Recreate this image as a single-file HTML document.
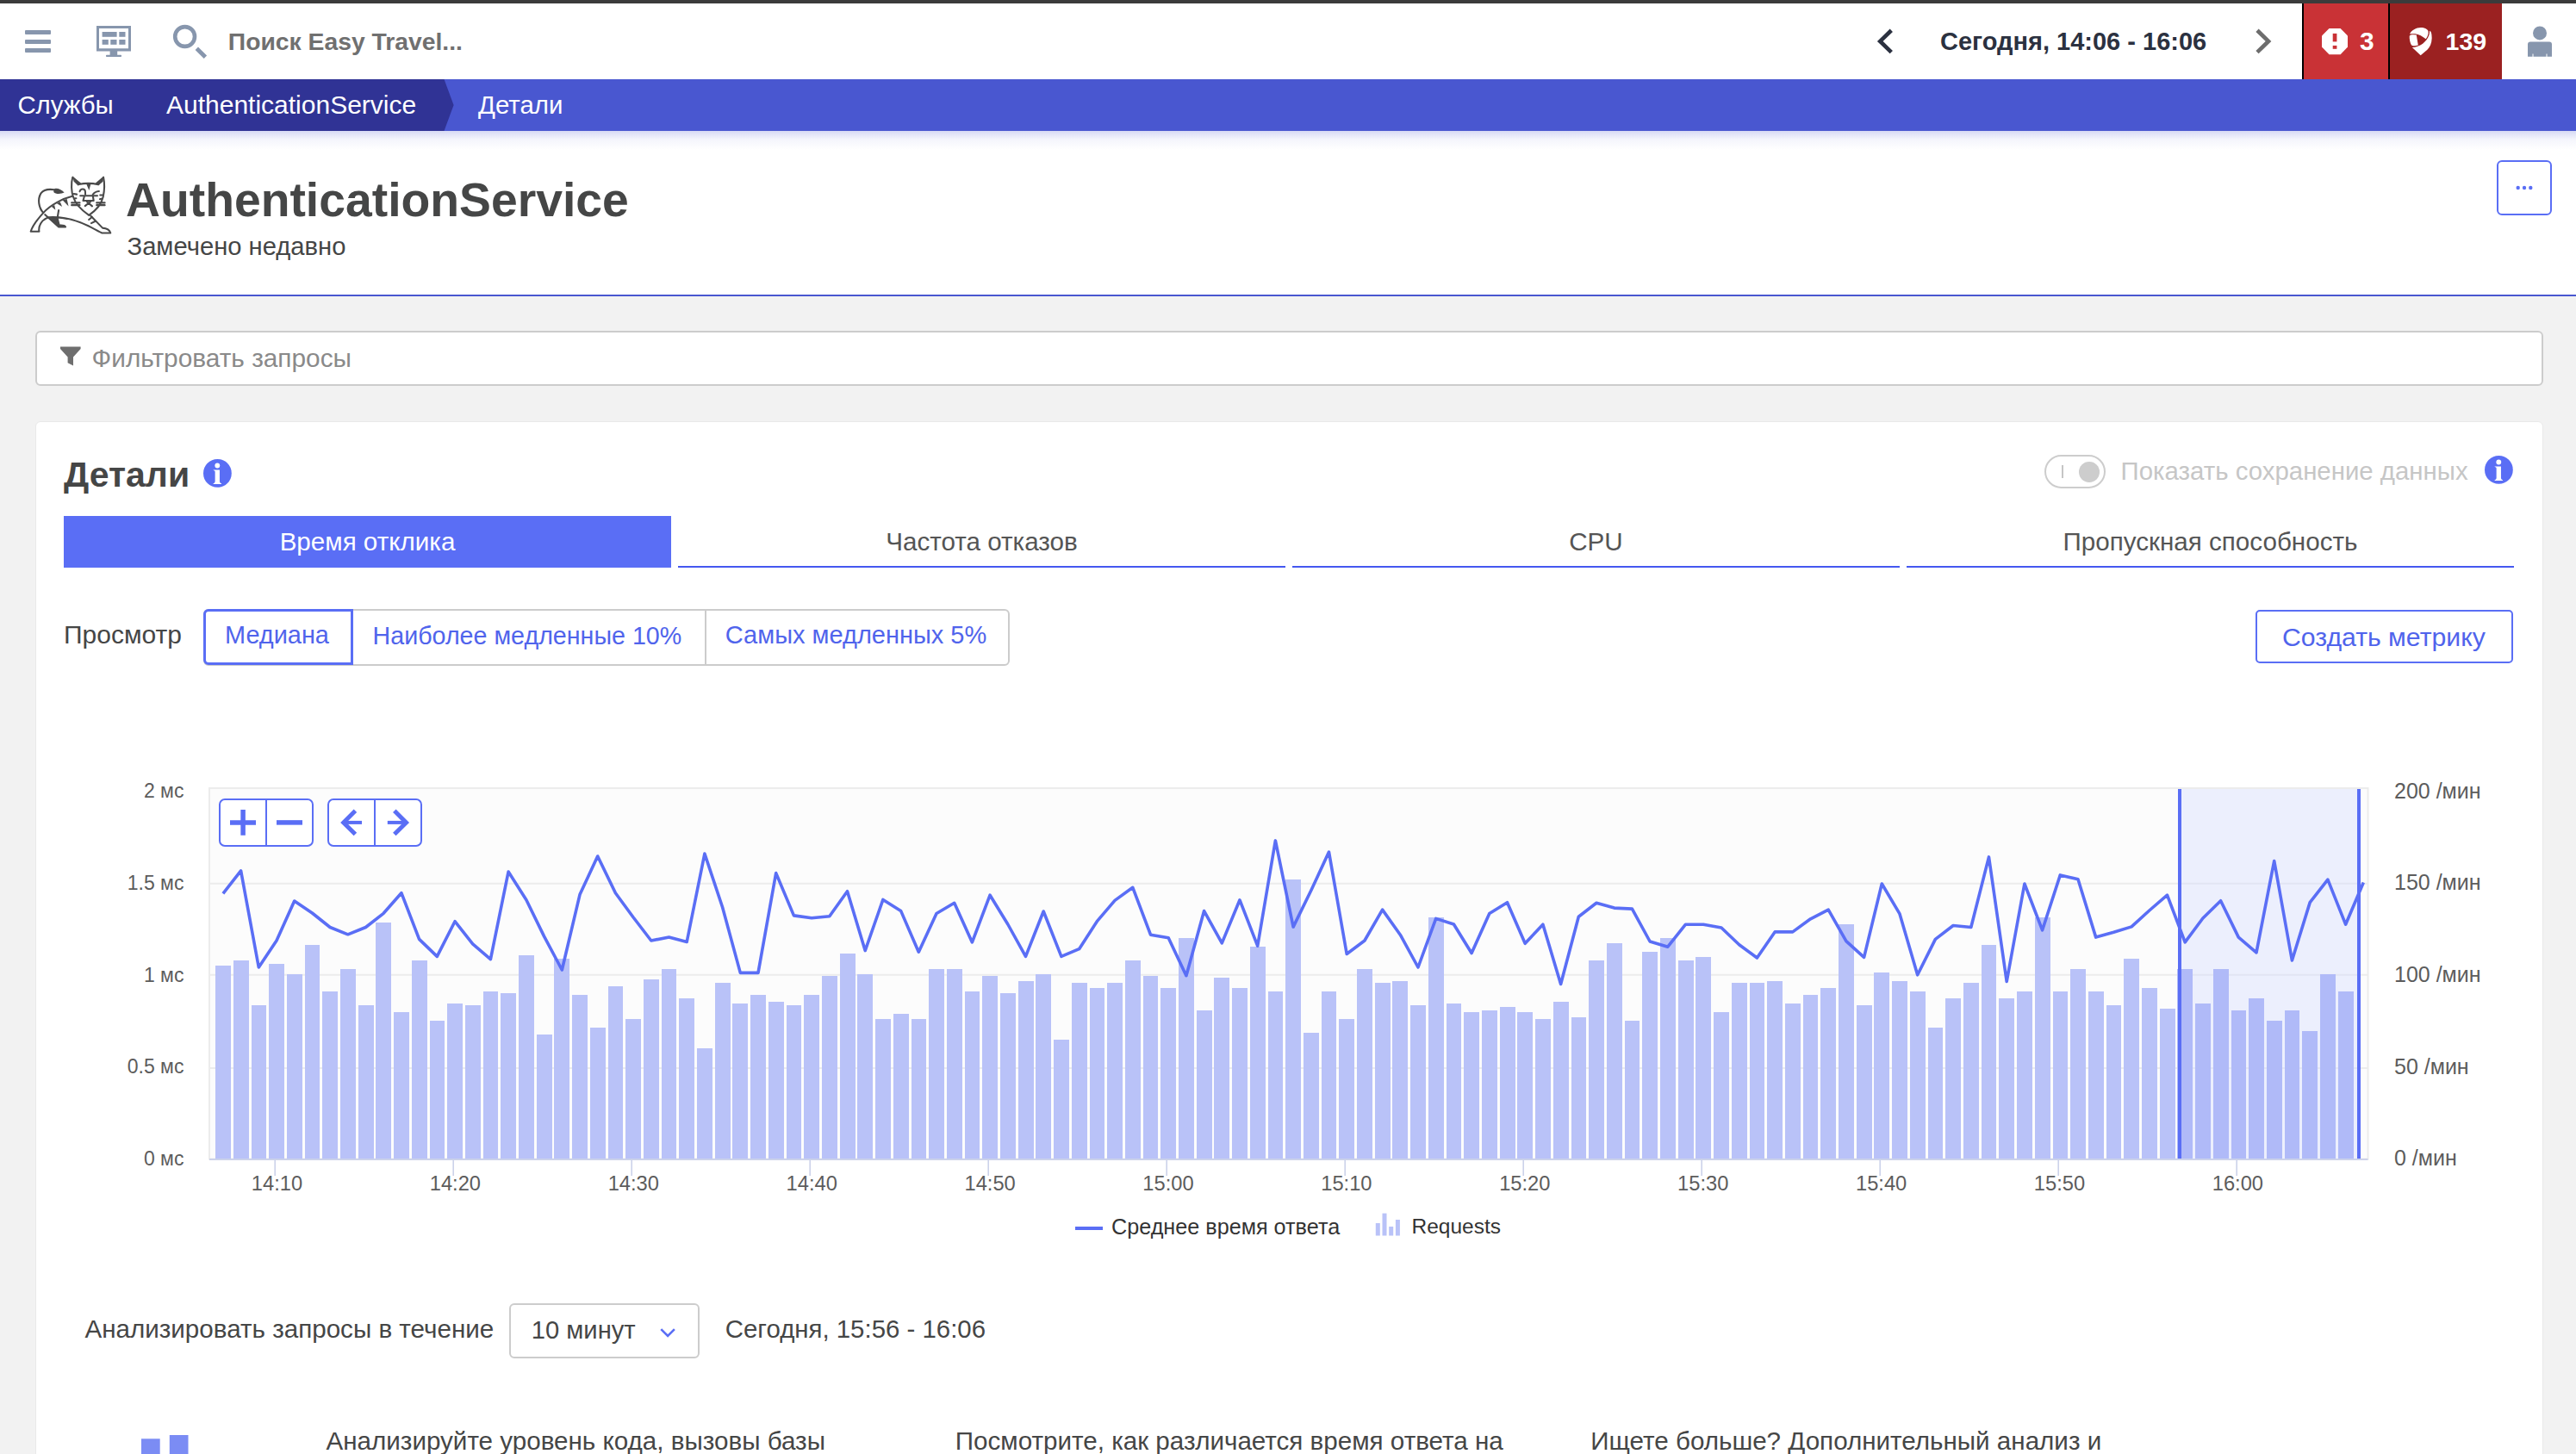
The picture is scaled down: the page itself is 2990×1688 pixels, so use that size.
<!DOCTYPE html>
<html><head><meta charset="utf-8"><title>AuthenticationService</title>
<style>
html,body{margin:0;padding:0;}
body{width:2990px;height:1688px;overflow:hidden;position:relative;background:#f2f2f2;font-family:"Liberation Sans", sans-serif;}
.t{position:absolute;line-height:1;white-space:nowrap;}
svg{position:absolute;overflow:visible;}
</style></head><body>
<div style="position:absolute;left:0px;top:0px;width:2990px;height:92px;background:#ffffff;"></div>
<div style="position:absolute;left:0px;top:0px;width:2990px;height:4px;background:#3b3b3b;"></div>
<div style="position:absolute;left:29px;top:35.3px;width:30px;height:4.5px;background:#8796ad;border-radius:1px;"></div>
<div style="position:absolute;left:29px;top:46px;width:30px;height:4.5px;background:#8796ad;border-radius:1px;"></div>
<div style="position:absolute;left:29px;top:56.2px;width:30px;height:4.5px;background:#8796ad;border-radius:1px;"></div>
<svg style="left:0;top:0" width="300" height="92" viewBox="0 0 300 92">
<g fill="#8796ad">
<path d="M112 30h40v29.4h-40zM115 33v23.2h34V33z" fill-rule="evenodd"/>
<rect x="118.6" y="37" width="17" height="5.8"/><rect x="138.3" y="37" width="7.2" height="5.8"/>
<rect x="118.6" y="46" width="7.2" height="5.8"/><rect x="128.3" y="46" width="7.2" height="5.8"/><rect x="138.3" y="46" width="7.2" height="5.8"/>
<rect x="127.6" y="59" width="8.6" height="5"/><rect x="123" y="63.8" width="18" height="2.2" rx="0.8"/>
</g>
<circle cx="214.6" cy="42.5" r="11.4" fill="none" stroke="#8796ad" stroke-width="4.6"/>
<path d="M228.3 56.2L238.4 66.2" stroke="#8796ad" stroke-width="4.8"/>
</svg>
<div class="t" style="left:264.8px;top:34.4px;font-size:28.3px;color:#707070;font-weight:700;">Поиск Easy Travel...</div>
<svg style="left:0;top:0" width="2990" height="92" viewBox="0 0 2990 92">
<path d="M2195.3 35.2L2182.3 47.9L2195.3 60.6" fill="none" stroke="#2b3140" stroke-width="4.7"/>
<path d="M2620 35.2L2633 47.9L2620 60.6" fill="none" stroke="#6d6d6d" stroke-width="4.7"/>
</svg>
<div class="t" style="left:2252.0px;top:34.2px;font-size:29px;color:#2b3140;font-weight:700;">Сегодня, 14:06 - 16:06</div>
<div style="position:absolute;left:2672px;top:4px;width:100px;height:88px;background:#c93236;"></div>
<div style="position:absolute;left:2774px;top:4px;width:130px;height:88px;background:#9b2121;"></div>
<div style="position:absolute;left:2672px;top:4px;width:2px;height:88px;background:#000000;"></div>
<div style="position:absolute;left:2772px;top:4px;width:2px;height:88px;background:#000000;"></div>
<svg style="left:0;top:0" width="2990" height="92" viewBox="0 0 2990 92">
<path d="M2703.5 32.9H2716.6L2725 41.5V54.5L2716.6 63.2H2703.5L2695 54.5V41.5z" fill="#fff"/>
<rect x="2707.7" y="38.9" width="4.7" height="9.5" fill="#c93236"/><rect x="2707.7" y="52.9" width="4.7" height="3.9" fill="#c93236"/>
</svg>
<svg style="left:2790px;top:26px" width="40" height="44" viewBox="0 0 1322 1454"><g fill="#fff">
<path d="M232 445C290 300 480 195 655 195C800 195 930 255 945 345C955 440 915 550 850 640C730 540 580 460 440 440C360 430 280 435 232 445Z"/>
<path d="M222 530C228 480 300 462 380 468L488 478L555 875C450 905 340 915 295 865C240 790 218 620 222 530Z"/>
<path d="M1000 325C1055 345 1080 450 1080 600C1075 800 1005 950 905 1050L650 1265L325 960C460 950 610 900 730 815C840 735 930 610 975 480C988 420 992 370 1000 325Z"/>
</g></svg>
<div class="t" style="left:2739.0px;top:33.2px;font-size:29.9px;color:#ffffff;font-weight:700;">3</div>
<div class="t" style="left:2838.6px;top:34.4px;font-size:28.5px;color:#ffffff;font-weight:700;">139</div>
<svg style="left:0;top:0" width="2990" height="92" viewBox="0 0 2990 92">
<circle cx="2948" cy="38.4" r="8" fill="#8796ad"/>
<path d="M2934 51.5q0-3 3-3h22q3 0 3 3v14.2h-5.5v-3.3h-1v3.3h-15v-3.3h-1v3.3h-5.5z" fill="#8796ad"/>
</svg>
<div style="position:absolute;left:0px;top:152px;width:2990px;height:190px;background:#ffffff;"></div>
<div style="position:absolute;left:0;top:152px;width:2990px;height:22px;background:linear-gradient(rgba(73,87,208,0.22),rgba(73,87,208,0.06) 45%,rgba(73,87,208,0))"></div>
<div style="position:absolute;left:0;top:92px;width:2990px;height:60px;background:#4957d0;"></div>
<svg style="left:0;top:92px" width="600" height="60" viewBox="0 0 600 60"><path d="M0 0H515.5L526.6 30L515.5 60H0z" fill="#303395"/></svg>
<div class="t" style="left:20.4px;top:107.3px;font-size:29.4px;color:#ffffff;font-weight:400;">Службы</div>
<div class="t" style="left:193.0px;top:106.8px;font-size:30px;color:#ffffff;font-weight:400;">AuthenticationService</div>
<div class="t" style="left:555.0px;top:107.3px;font-size:29.4px;color:#ffffff;font-weight:400;">Детали</div>
<div style="position:absolute;left:0px;top:341.5px;width:2990px;height:2.0px;background:#4957d0;"></div>
<div class="t" style="left:146.0px;top:204.5px;font-size:55.3px;color:#454646;font-weight:700;">AuthenticationService</div>
<div class="t" style="left:147.5px;top:272.3px;font-size:29.2px;color:#454646;font-weight:400;">Замечено недавно</div>
<div style="position:absolute;left:2898.3px;top:186px;width:59.5px;height:59.7px;border:2px solid #5a6ef5;border-radius:6px;background:#fff"></div>
<svg style="left:0;top:0" width="2990" height="342" viewBox="0 0 2990 342"><g fill="#5a6ef5"><circle cx="2922.7" cy="218" r="2.2"/><circle cx="2930" cy="218" r="2.2"/><circle cx="2937.3" cy="218" r="2.2"/></g></svg>
<svg style="left:20px;top:190px" width="140" height="100" viewBox="0 0 2036 1454">
<g fill="none" stroke="#4a4a4a" stroke-width="30" stroke-linejoin="round" stroke-linecap="round">
<path d="M935 230C905 330 915 480 945 560C975 660 1050 760 1210 870C1330 790 1420 690 1450 560C1480 420 1470 300 1455 230"/>
<path d="M1040 350C1130 330 1270 330 1370 352"/>
<path d="M1055 470C1070 420 1140 410 1148 470L1150 520"/>
<path d="M1275 525C1300 480 1340 468 1380 465"/>
<path d="M1065 542H1352"/>
<path d="M1132 552L1112 625H1290L1278 552"/>
<path d="M1145 715L1240 640M1178 642L1265 718"/>
<path d="M918 660H1055M918 700H1055M1340 660H1478M1340 700H1478"/>
<path d="M955 510L1005 518M1400 532H1440M975 585H995M1395 600L1420 592"/>
<path d="M930 550C760 590 560 700 440 830C340 940 260 1040 228 1145H370C355 1060 400 950 530 905C700 895 950 930 1200 1050C1300 1100 1380 1150 1430 1170H1575C1560 1120 1500 1090 1440 1085L1240 880"/>
<path d="M440 830C360 740 340 600 400 500C460 420 560 430 625 440"/>
<path d="M470 860L700 1070H815"/>
<path d="M700 785L680 905"/>
<path d="M1210 945L1262 902M1250 1005L1312 975"/>
</g>
<g fill="#4a4a4a">
<path d="M935 212L1078 330L1030 375L955 300z"/>
<path d="M1458 212L1318 330L1372 368L1448 300z"/>
<path d="M1170 350H1240L1212 450z"/>
<path d="M615 440C640 400 730 420 795 488C740 515 650 520 615 480z"/>
<path d="M520 900L690 905L720 1025C760 1020 820 1030 825 1060C815 1080 760 1080 700 1072z"/>
<path d="M578 722L628 698L645 780z"/>
<path d="M665 668L725 648L758 728z"/>
<path d="M765 615L838 595L866 718z"/>
</g>
</svg>
<div style="position:absolute;left:41px;top:384px;width:2906.6px;height:59.6px;border:2px solid #cccccc;border-radius:6px;background:#fff"></div>
<svg style="left:0;top:0" width="200" height="460" viewBox="0 0 200 460"><path d="M70 402.6H93.6V405L85 414.5V424.6L78.6 421.2V414.5L70 405z" fill="#6e6e6e"/></svg>
<div class="t" style="left:106.6px;top:401.2px;font-size:29.8px;color:#8a8a8a;font-weight:400;">Фильтровать запросы</div>
<div style="position:absolute;left:40.5px;top:488.5px;width:2909px;height:1300px;background:#fff;border:1.5px solid #e9e9e9;border-radius:6px"></div>
<div class="t" style="left:74.0px;top:531.3px;font-size:41px;color:#454646;font-weight:700;">Детали</div>
<svg style="left:235.6px;top:533.3000000000001px" width="32.8" height="32.8" viewBox="-16 -16 32 32"><circle r="16" fill="#5a6ef5"/><circle cx="-0.1" cy="-8.7" r="2.85" fill="#fff"/><path d="M-4.6 -3.9H2.5V9.4C2.6 10.7 3.4 11.3 4.5 11.6V12.4H-4.7V11.6C-3.6 11.3 -2.8 10.7 -2.7 9.4V-1.6C-2.8 -2.6 -3.5 -3.1 -4.6 -3.3z" fill="#fff"/></svg>
<svg style="left:2883.6px;top:529.2px" width="32.8" height="32.8" viewBox="-16 -16 32 32"><circle r="16" fill="#5a6ef5"/><circle cx="-0.1" cy="-8.7" r="2.85" fill="#fff"/><path d="M-4.6 -3.9H2.5V9.4C2.6 10.7 3.4 11.3 4.5 11.6V12.4H-4.7V11.6C-3.6 11.3 -2.8 10.7 -2.7 9.4V-1.6C-2.8 -2.6 -3.5 -3.1 -4.6 -3.3z" fill="#fff"/></svg>
<div style="position:absolute;left:2372.9px;top:527.9px;width:66.7px;height:34.8px;border:2.5px solid #cdcdcd;border-radius:20px;box-sizing:content-box;"></div>
<div style="position:absolute;left:2393px;top:540px;width:2px;height:15px;background:#c5c5c5;"></div>
<div style="position:absolute;left:2413px;top:535.9px;width:23.8px;height:23.8px;border-radius:50%;background:#cdcdcd"></div>
<div class="t" style="left:2461.6px;top:531.8px;font-size:29.4px;color:#c6c6c6;font-weight:400;">Показать сохранение данных</div>
<div style="position:absolute;left:74px;top:599px;width:705px;height:60px;background:#5a6ef5;"></div>
<div class="t" style="left:-73.5px;width:1000px;text-align:center;top:614.4px;font-size:29.6px;color:#ffffff;font-weight:400;">Время отклика</div>
<div style="position:absolute;left:787px;top:657px;width:705px;height:2px;background:#4458f0;"></div>
<div class="t" style="left:639.5px;width:1000px;text-align:center;top:614.4px;font-size:29.6px;color:#555555;font-weight:400;">Частота отказов</div>
<div style="position:absolute;left:1500px;top:657px;width:705px;height:2px;background:#4458f0;"></div>
<div class="t" style="left:1352.5px;width:1000px;text-align:center;top:614.4px;font-size:29.6px;color:#555555;font-weight:400;">CPU</div>
<div style="position:absolute;left:2213px;top:657px;width:705px;height:2px;background:#4458f0;"></div>
<div class="t" style="left:2065.5px;width:1000px;text-align:center;top:614.4px;font-size:29.6px;color:#555555;font-weight:400;">Пропускная способность</div>
<div class="t" style="left:74.0px;top:722.4px;font-size:30px;color:#454646;font-weight:400;">Просмотр</div>
<div style="position:absolute;left:236px;top:707px;width:932px;height:61.8px;border:2.2px solid #cccccc;border-radius:6px;background:#fff"></div>
<div style="position:absolute;left:818px;top:709px;width:2px;height:62px;background:#cccccc;"></div>
<div style="position:absolute;left:236px;top:707px;width:168px;height:58.8px;border:3.6px solid #5a6ef5;border-radius:6px 0 0 6px;"></div>
<div class="t" style="left:261.0px;top:723.3px;font-size:28.9px;color:#5064ec;font-weight:400;">Медиана</div>
<div class="t" style="left:432.6px;top:723.5px;font-size:28.65px;color:#5064ec;font-weight:400;">Наиболее медленные 10%</div>
<div class="t" style="left:841.8px;top:723.3px;font-size:29px;color:#5064ec;font-weight:400;">Самых медленных 5%</div>
<div style="position:absolute;left:2617.6px;top:707.5px;width:295.5px;height:58.5px;border:2px solid #5a6ef5;border-radius:5px;background:#fff"></div>
<div class="t" style="left:2649.0px;top:725.4px;font-size:30.2px;color:#5064ec;font-weight:400;">Создать метрику</div>
<svg style="left:0;top:0" width="2990" height="1688" viewBox="0 0 2990 1688"><rect x="243" y="915" width="2505.5" height="430.5" fill="#fcfcfc" stroke="#ececec" stroke-width="2"/><line x1="243" y1="1240.0" x2="2748.5" y2="1240.0" stroke="#ececec" stroke-width="2"/><line x1="243" y1="1131.7" x2="2748.5" y2="1131.7" stroke="#ececec" stroke-width="2"/><line x1="243" y1="1025.8" x2="2748.5" y2="1025.8" stroke="#ececec" stroke-width="2"/><rect x="2530" y="916" width="208" height="429.5" fill="#eceffd"/><line x1="2530" y1="1240.0" x2="2738" y2="1240.0" stroke="#e2e5f3" stroke-width="2"/><line x1="2530" y1="1131.7" x2="2738" y2="1131.7" stroke="#e2e5f3" stroke-width="2"/><line x1="2530" y1="1025.8" x2="2738" y2="1025.8" stroke="#e2e5f3" stroke-width="2"/><rect x="250" y="1121" width="18" height="224" fill="#b9c2f8"/><rect x="271" y="1115" width="18" height="230" fill="#b9c2f8"/><rect x="292" y="1167" width="17" height="178" fill="#b9c2f8"/><rect x="312" y="1119" width="18" height="226" fill="#b9c2f8"/><rect x="333" y="1131" width="18" height="214" fill="#b9c2f8"/><rect x="354" y="1097" width="17" height="248" fill="#b9c2f8"/><rect x="374" y="1151" width="18" height="194" fill="#b9c2f8"/><rect x="395" y="1125" width="18" height="220" fill="#b9c2f8"/><rect x="416" y="1167" width="18" height="178" fill="#b9c2f8"/><rect x="436" y="1071" width="18" height="274" fill="#b9c2f8"/><rect x="457" y="1175" width="18" height="170" fill="#b9c2f8"/><rect x="478" y="1115" width="18" height="230" fill="#b9c2f8"/><rect x="499" y="1185" width="17" height="160" fill="#b9c2f8"/><rect x="519" y="1165" width="18" height="180" fill="#b9c2f8"/><rect x="540" y="1167" width="18" height="178" fill="#b9c2f8"/><rect x="561" y="1151" width="17" height="194" fill="#b9c2f8"/><rect x="581" y="1153" width="18" height="192" fill="#b9c2f8"/><rect x="602" y="1109" width="18" height="236" fill="#b9c2f8"/><rect x="623" y="1201" width="18" height="144" fill="#b9c2f8"/><rect x="643" y="1113" width="18" height="232" fill="#b9c2f8"/><rect x="664" y="1155" width="18" height="190" fill="#b9c2f8"/><rect x="685" y="1193" width="18" height="152" fill="#b9c2f8"/><rect x="706" y="1145" width="17" height="200" fill="#b9c2f8"/><rect x="726" y="1183" width="18" height="162" fill="#b9c2f8"/><rect x="747" y="1137" width="18" height="208" fill="#b9c2f8"/><rect x="768" y="1125" width="17" height="220" fill="#b9c2f8"/><rect x="788" y="1159" width="18" height="186" fill="#b9c2f8"/><rect x="809" y="1217" width="18" height="128" fill="#b9c2f8"/><rect x="830" y="1141" width="18" height="204" fill="#b9c2f8"/><rect x="850" y="1165" width="18" height="180" fill="#b9c2f8"/><rect x="871" y="1155" width="18" height="190" fill="#b9c2f8"/><rect x="892" y="1163" width="18" height="182" fill="#b9c2f8"/><rect x="913" y="1167" width="17" height="178" fill="#b9c2f8"/><rect x="933" y="1155" width="18" height="190" fill="#b9c2f8"/><rect x="954" y="1133" width="18" height="212" fill="#b9c2f8"/><rect x="975" y="1107" width="18" height="238" fill="#b9c2f8"/><rect x="995" y="1131" width="18" height="214" fill="#b9c2f8"/><rect x="1016" y="1183" width="18" height="162" fill="#b9c2f8"/><rect x="1037" y="1177" width="18" height="168" fill="#b9c2f8"/><rect x="1058" y="1183" width="17" height="162" fill="#b9c2f8"/><rect x="1078" y="1125" width="18" height="220" fill="#b9c2f8"/><rect x="1099" y="1125" width="18" height="220" fill="#b9c2f8"/><rect x="1120" y="1151" width="17" height="194" fill="#b9c2f8"/><rect x="1140" y="1133" width="18" height="212" fill="#b9c2f8"/><rect x="1161" y="1153" width="18" height="192" fill="#b9c2f8"/><rect x="1182" y="1139" width="18" height="206" fill="#b9c2f8"/><rect x="1202" y="1131" width="18" height="214" fill="#b9c2f8"/><rect x="1223" y="1207" width="18" height="138" fill="#b9c2f8"/><rect x="1244" y="1141" width="18" height="204" fill="#b9c2f8"/><rect x="1265" y="1147" width="17" height="198" fill="#b9c2f8"/><rect x="1285" y="1141" width="18" height="204" fill="#b9c2f8"/><rect x="1306" y="1115" width="18" height="230" fill="#b9c2f8"/><rect x="1327" y="1133" width="17" height="212" fill="#b9c2f8"/><rect x="1347" y="1147" width="18" height="198" fill="#b9c2f8"/><rect x="1368" y="1089" width="18" height="256" fill="#b9c2f8"/><rect x="1389" y="1173" width="18" height="172" fill="#b9c2f8"/><rect x="1409" y="1135" width="18" height="210" fill="#b9c2f8"/><rect x="1430" y="1147" width="18" height="198" fill="#b9c2f8"/><rect x="1451" y="1099" width="18" height="246" fill="#b9c2f8"/><rect x="1472" y="1151" width="17" height="194" fill="#b9c2f8"/><rect x="1492" y="1021" width="18" height="324" fill="#b9c2f8"/><rect x="1513" y="1199" width="18" height="146" fill="#b9c2f8"/><rect x="1534" y="1151" width="17" height="194" fill="#b9c2f8"/><rect x="1554" y="1183" width="18" height="162" fill="#b9c2f8"/><rect x="1575" y="1125" width="18" height="220" fill="#b9c2f8"/><rect x="1596" y="1141" width="18" height="204" fill="#b9c2f8"/><rect x="1616" y="1139" width="18" height="206" fill="#b9c2f8"/><rect x="1637" y="1167" width="18" height="178" fill="#b9c2f8"/><rect x="1658" y="1065" width="18" height="280" fill="#b9c2f8"/><rect x="1679" y="1165" width="17" height="180" fill="#b9c2f8"/><rect x="1699" y="1175" width="18" height="170" fill="#b9c2f8"/><rect x="1720" y="1173" width="18" height="172" fill="#b9c2f8"/><rect x="1741" y="1169" width="18" height="176" fill="#b9c2f8"/><rect x="1761" y="1175" width="18" height="170" fill="#b9c2f8"/><rect x="1782" y="1183" width="18" height="162" fill="#b9c2f8"/><rect x="1803" y="1163" width="18" height="182" fill="#b9c2f8"/><rect x="1824" y="1181" width="17" height="164" fill="#b9c2f8"/><rect x="1844" y="1115" width="18" height="230" fill="#b9c2f8"/><rect x="1865" y="1095" width="18" height="250" fill="#b9c2f8"/><rect x="1886" y="1185" width="17" height="160" fill="#b9c2f8"/><rect x="1906" y="1105" width="18" height="240" fill="#b9c2f8"/><rect x="1927" y="1089" width="18" height="256" fill="#b9c2f8"/><rect x="1948" y="1115" width="18" height="230" fill="#b9c2f8"/><rect x="1968" y="1111" width="18" height="234" fill="#b9c2f8"/><rect x="1989" y="1175" width="18" height="170" fill="#b9c2f8"/><rect x="2010" y="1141" width="18" height="204" fill="#b9c2f8"/><rect x="2031" y="1141" width="17" height="204" fill="#b9c2f8"/><rect x="2051" y="1139" width="18" height="206" fill="#b9c2f8"/><rect x="2072" y="1165" width="18" height="180" fill="#b9c2f8"/><rect x="2093" y="1155" width="17" height="190" fill="#b9c2f8"/><rect x="2113" y="1147" width="18" height="198" fill="#b9c2f8"/><rect x="2134" y="1073" width="18" height="272" fill="#b9c2f8"/><rect x="2155" y="1167" width="18" height="178" fill="#b9c2f8"/><rect x="2175" y="1129" width="18" height="216" fill="#b9c2f8"/><rect x="2196" y="1139" width="18" height="206" fill="#b9c2f8"/><rect x="2217" y="1151" width="18" height="194" fill="#b9c2f8"/><rect x="2238" y="1193" width="17" height="152" fill="#b9c2f8"/><rect x="2258" y="1159" width="18" height="186" fill="#b9c2f8"/><rect x="2279" y="1141" width="18" height="204" fill="#b9c2f8"/><rect x="2300" y="1097" width="17" height="248" fill="#b9c2f8"/><rect x="2320" y="1159" width="18" height="186" fill="#b9c2f8"/><rect x="2341" y="1151" width="18" height="194" fill="#b9c2f8"/><rect x="2362" y="1065" width="18" height="280" fill="#b9c2f8"/><rect x="2383" y="1151" width="17" height="194" fill="#b9c2f8"/><rect x="2403" y="1125" width="18" height="220" fill="#b9c2f8"/><rect x="2424" y="1151" width="18" height="194" fill="#b9c2f8"/><rect x="2445" y="1167" width="17" height="178" fill="#b9c2f8"/><rect x="2465" y="1113" width="18" height="232" fill="#b9c2f8"/><rect x="2486" y="1147" width="18" height="198" fill="#b9c2f8"/><rect x="2507" y="1171" width="18" height="174" fill="#b9c2f8"/><rect x="2527" y="1125" width="18" height="220" fill="#b0baf8"/><rect x="2548" y="1165" width="18" height="180" fill="#b0baf8"/><rect x="2569" y="1125" width="18" height="220" fill="#b0baf8"/><rect x="2590" y="1173" width="17" height="172" fill="#b0baf8"/><rect x="2610" y="1159" width="18" height="186" fill="#b0baf8"/><rect x="2631" y="1185" width="18" height="160" fill="#b0baf8"/><rect x="2652" y="1173" width="17" height="172" fill="#b0baf8"/><rect x="2672" y="1197" width="18" height="148" fill="#b0baf8"/><rect x="2693" y="1131" width="18" height="214" fill="#b0baf8"/><rect x="2714" y="1151" width="18" height="194" fill="#b0baf8"/><polyline points="258.9,1037.3 279.6,1010.9 300.3,1123.0 321.0,1092.0 341.7,1046.0 362.4,1060.0 383.1,1076.5 403.8,1084.8 424.5,1076.5 445.2,1060.3 465.9,1036.7 486.6,1090.4 507.3,1110.4 528.0,1069.7 548.7,1095.9 569.4,1113.7 590.1,1012.0 610.9,1044.8 631.6,1087.1 652.3,1126.0 673.0,1038.6 693.7,994.0 714.4,1036.7 735.1,1065.0 755.8,1092.0 776.5,1088.1 797.2,1093.5 817.9,991.1 838.6,1053.2 859.3,1129.4 880.0,1129.4 900.7,1013.6 921.4,1062.9 942.1,1065.8 962.8,1063.8 983.5,1034.7 1004.2,1103.6 1024.9,1044.4 1045.6,1057.4 1066.3,1105.2 1087.0,1060.5 1107.7,1048.3 1128.4,1093.9 1149.1,1039.2 1169.8,1073.0 1190.5,1110.4 1211.2,1058.0 1231.9,1110.4 1252.6,1101.7 1273.3,1069.7 1294.0,1045.4 1314.8,1030.3 1335.5,1085.2 1356.2,1088.7 1376.9,1132.7 1397.6,1057.6 1418.3,1094.9 1439.0,1044.8 1459.7,1098.2 1480.4,975.9 1501.1,1076.1 1521.8,1033.8 1542.5,989.1 1563.2,1107.5 1583.9,1092.0 1604.6,1056.1 1625.3,1085.2 1646.0,1123.0 1666.7,1066.4 1687.4,1073.0 1708.1,1106.5 1728.8,1060.5 1749.5,1047.7 1770.2,1095.3 1790.9,1073.2 1811.6,1142.5 1832.3,1064.2 1853.0,1048.3 1873.7,1054.1 1894.4,1055.1 1915.1,1093.0 1935.8,1099.2 1956.5,1073.2 1977.2,1073.2 1998.0,1077.0 2018.7,1096.8 2039.4,1112.0 2060.1,1081.9 2080.8,1081.9 2101.5,1066.8 2122.2,1056.1 2142.9,1092.6 2163.6,1111.4 2184.3,1026.0 2205.0,1060.9 2225.7,1131.8 2246.4,1090.4 2267.1,1074.5 2287.8,1076.5 2308.5,994.9 2329.2,1139.5 2349.9,1026.0 2370.6,1079.8 2391.3,1015.9 2412.0,1020.8 2432.7,1088.1 2453.4,1082.3 2474.1,1075.9 2494.8,1057.0 2515.5,1039.2 2536.2,1093.9 2556.9,1066.0 2577.6,1045.7 2598.3,1088.1 2619.0,1105.8 2639.7,999.5 2660.4,1115.0 2681.2,1047.6 2701.9,1021.1 2722.6,1073.2 2743.3,1024.5" fill="none" stroke="#5a6ef5" stroke-width="3.6" stroke-linejoin="round"/><rect x="2528" y="916" width="4" height="429.5" fill="#5a6ef5"/><rect x="2736" y="916" width="4" height="429.5" fill="#5a6ef5"/><rect x="243" y="1345" width="2505.5" height="2" fill="#ccd2ea"/><rect x="318.4" y="1346" width="1.6" height="19" fill="#ccd2ea"/><rect x="525.4" y="1346" width="1.6" height="19" fill="#ccd2ea"/><rect x="732.4" y="1346" width="1.6" height="19" fill="#ccd2ea"/><rect x="939.4" y="1346" width="1.6" height="19" fill="#ccd2ea"/><rect x="1146.4" y="1346" width="1.6" height="19" fill="#ccd2ea"/><rect x="1353.4" y="1346" width="1.6" height="19" fill="#ccd2ea"/><rect x="1560.4" y="1346" width="1.6" height="19" fill="#ccd2ea"/><rect x="1767.4" y="1346" width="1.6" height="19" fill="#ccd2ea"/><rect x="1974.4" y="1346" width="1.6" height="19" fill="#ccd2ea"/><rect x="2181.4" y="1346" width="1.6" height="19" fill="#ccd2ea"/><rect x="2388.4" y="1346" width="1.6" height="19" fill="#ccd2ea"/><rect x="2595.4" y="1346" width="1.6" height="19" fill="#ccd2ea"/></svg>
<div style="position:absolute;left:254.1px;top:926.9px;width:105.7px;height:52px;border:2px solid #5a6ef5;border-radius:7px;background:#fff"></div>
<div style="position:absolute;left:308px;top:928.9px;width:2px;height:52.0px;background:#5a6ef5;"></div>
<div style="position:absolute;left:380.1px;top:926.9px;width:105.9px;height:52px;border:2px solid #5a6ef5;border-radius:7px;background:#fff"></div>
<div style="position:absolute;left:434px;top:928.9px;width:2px;height:52.0px;background:#5a6ef5;"></div>
<svg style="left:0;top:0" width="600" height="1000" viewBox="0 0 600 1000"><g stroke="#5a6ef5" fill="none" stroke-linejoin="miter">
<path d="M267 954.9H297M282.1 940.1V969.8" stroke-width="5.5"/>
<path d="M321 954.9H351" stroke-width="5.5"/>
<path d="M397.5 954.9H420" stroke-width="4"/>
<path d="M412.4 941.2L398.7 954.9L412.4 968.6" stroke-width="5"/>
<path d="M449.8 954.9H472.5" stroke-width="4"/>
<path d="M457.8 941.2L471.5 954.9L457.8 968.6" stroke-width="5"/>
</g></svg>
<div class="t" style="right:2776.6px;text-align:right;top:1333.8px;font-size:23px;color:#5c5c5c;font-weight:400;">0 мс</div>
<div class="t" style="left:2779.0px;top:1332.1px;font-size:25px;color:#5c5c5c;font-weight:400;">0 /мин</div>
<div class="t" style="right:2776.6px;text-align:right;top:1227.2px;font-size:23px;color:#5c5c5c;font-weight:400;">0.5 мс</div>
<div class="t" style="left:2779.0px;top:1225.5px;font-size:25px;color:#5c5c5c;font-weight:400;">50 /мин</div>
<div class="t" style="right:2776.6px;text-align:right;top:1120.5px;font-size:23px;color:#5c5c5c;font-weight:400;">1 мс</div>
<div class="t" style="left:2779.0px;top:1118.8px;font-size:25px;color:#5c5c5c;font-weight:400;">100 /мин</div>
<div class="t" style="right:2776.6px;text-align:right;top:1013.8px;font-size:23px;color:#5c5c5c;font-weight:400;">1.5 мс</div>
<div class="t" style="left:2779.0px;top:1012.1px;font-size:25px;color:#5c5c5c;font-weight:400;">150 /мин</div>
<div class="t" style="right:2776.6px;text-align:right;top:907.2px;font-size:23px;color:#5c5c5c;font-weight:400;">2 мс</div>
<div class="t" style="left:2779.0px;top:905.5px;font-size:25px;color:#5c5c5c;font-weight:400;">200 /мин</div>
<div class="t" style="left:-178.5px;width:1000px;text-align:center;top:1362.9px;font-size:23.7px;color:#5c5c5c;font-weight:400;">14:10</div>
<div class="t" style="left:28.4px;width:1000px;text-align:center;top:1362.9px;font-size:23.7px;color:#5c5c5c;font-weight:400;">14:20</div>
<div class="t" style="left:235.3px;width:1000px;text-align:center;top:1362.9px;font-size:23.7px;color:#5c5c5c;font-weight:400;">14:30</div>
<div class="t" style="left:442.2px;width:1000px;text-align:center;top:1362.9px;font-size:23.7px;color:#5c5c5c;font-weight:400;">14:40</div>
<div class="t" style="left:649.1px;width:1000px;text-align:center;top:1362.9px;font-size:23.7px;color:#5c5c5c;font-weight:400;">14:50</div>
<div class="t" style="left:856.0px;width:1000px;text-align:center;top:1362.9px;font-size:23.7px;color:#5c5c5c;font-weight:400;">15:00</div>
<div class="t" style="left:1062.9px;width:1000px;text-align:center;top:1362.9px;font-size:23.7px;color:#5c5c5c;font-weight:400;">15:10</div>
<div class="t" style="left:1269.8px;width:1000px;text-align:center;top:1362.9px;font-size:23.7px;color:#5c5c5c;font-weight:400;">15:20</div>
<div class="t" style="left:1476.7px;width:1000px;text-align:center;top:1362.9px;font-size:23.7px;color:#5c5c5c;font-weight:400;">15:30</div>
<div class="t" style="left:1683.6px;width:1000px;text-align:center;top:1362.9px;font-size:23.7px;color:#5c5c5c;font-weight:400;">15:40</div>
<div class="t" style="left:1890.5px;width:1000px;text-align:center;top:1362.9px;font-size:23.7px;color:#5c5c5c;font-weight:400;">15:50</div>
<div class="t" style="left:2097.4px;width:1000px;text-align:center;top:1362.9px;font-size:23.7px;color:#5c5c5c;font-weight:400;">16:00</div>
<div style="position:absolute;left:1248px;top:1423.5px;width:32px;height:4.0px;background:#5a6ef5;"></div>
<div class="t" style="left:1290.0px;top:1411.5px;font-size:25.2px;color:#333333;font-weight:400;">Среднее время ответа</div>
<svg style="left:1596px;top:1408px" width="32" height="28" viewBox="0 0 32 28"><g fill="#b9c2f8"><rect x="0.8" y="12" width="5" height="14.5"/><rect x="8.5" y="0.6" width="5" height="25.9"/><rect x="16.2" y="16" width="5" height="10.5"/><rect x="23.9" y="8" width="5" height="18.5"/></g></svg>
<div class="t" style="left:1638.5px;top:1412.1px;font-size:24.5px;color:#333333;font-weight:400;">Requests</div>
<div class="t" style="left:98.4px;top:1527.9px;font-size:29.6px;color:#454646;font-weight:400;">Анализировать запросы в течение</div>
<div style="position:absolute;left:591.3px;top:1513px;width:217.1px;height:59.6px;border:2px solid #cccccc;border-radius:6px;background:#fff"></div>
<div class="t" style="left:616.7px;top:1530.1px;font-size:29.2px;color:#454646;font-weight:400;">10 минут</div>
<svg style="left:0;top:0" width="900" height="1688" viewBox="0 0 900 1688"><path d="M767.3 1543.2L775.1 1551L782.9 1543.2" fill="none" stroke="#5a6ef5" stroke-width="2.6"/></svg>
<div class="t" style="left:841.8px;top:1528.4px;font-size:29.4px;color:#454646;font-weight:400;">Сегодня, 15:56 - 16:06</div>
<svg style="left:0;top:0" width="300" height="1688" viewBox="0 0 300 1688"><g fill="#7b8cf4"><rect x="164" y="1670.3" width="21.7" height="30"/><rect x="196.8" y="1666" width="21.7" height="40"/></g></svg>
<div class="t" style="left:378.5px;top:1658.4px;font-size:29.6px;color:#454646;font-weight:400;">Анализируйте уровень кода, вызовы базы</div>
<div class="t" style="left:1108.8px;top:1658.4px;font-size:29.6px;color:#454646;font-weight:400;">Посмотрите, как различается время ответа на</div>
<div class="t" style="left:1846.3px;top:1658.4px;font-size:29.6px;color:#454646;font-weight:400;">Ищете больше? Дополнительный анализ и</div>
</body></html>
